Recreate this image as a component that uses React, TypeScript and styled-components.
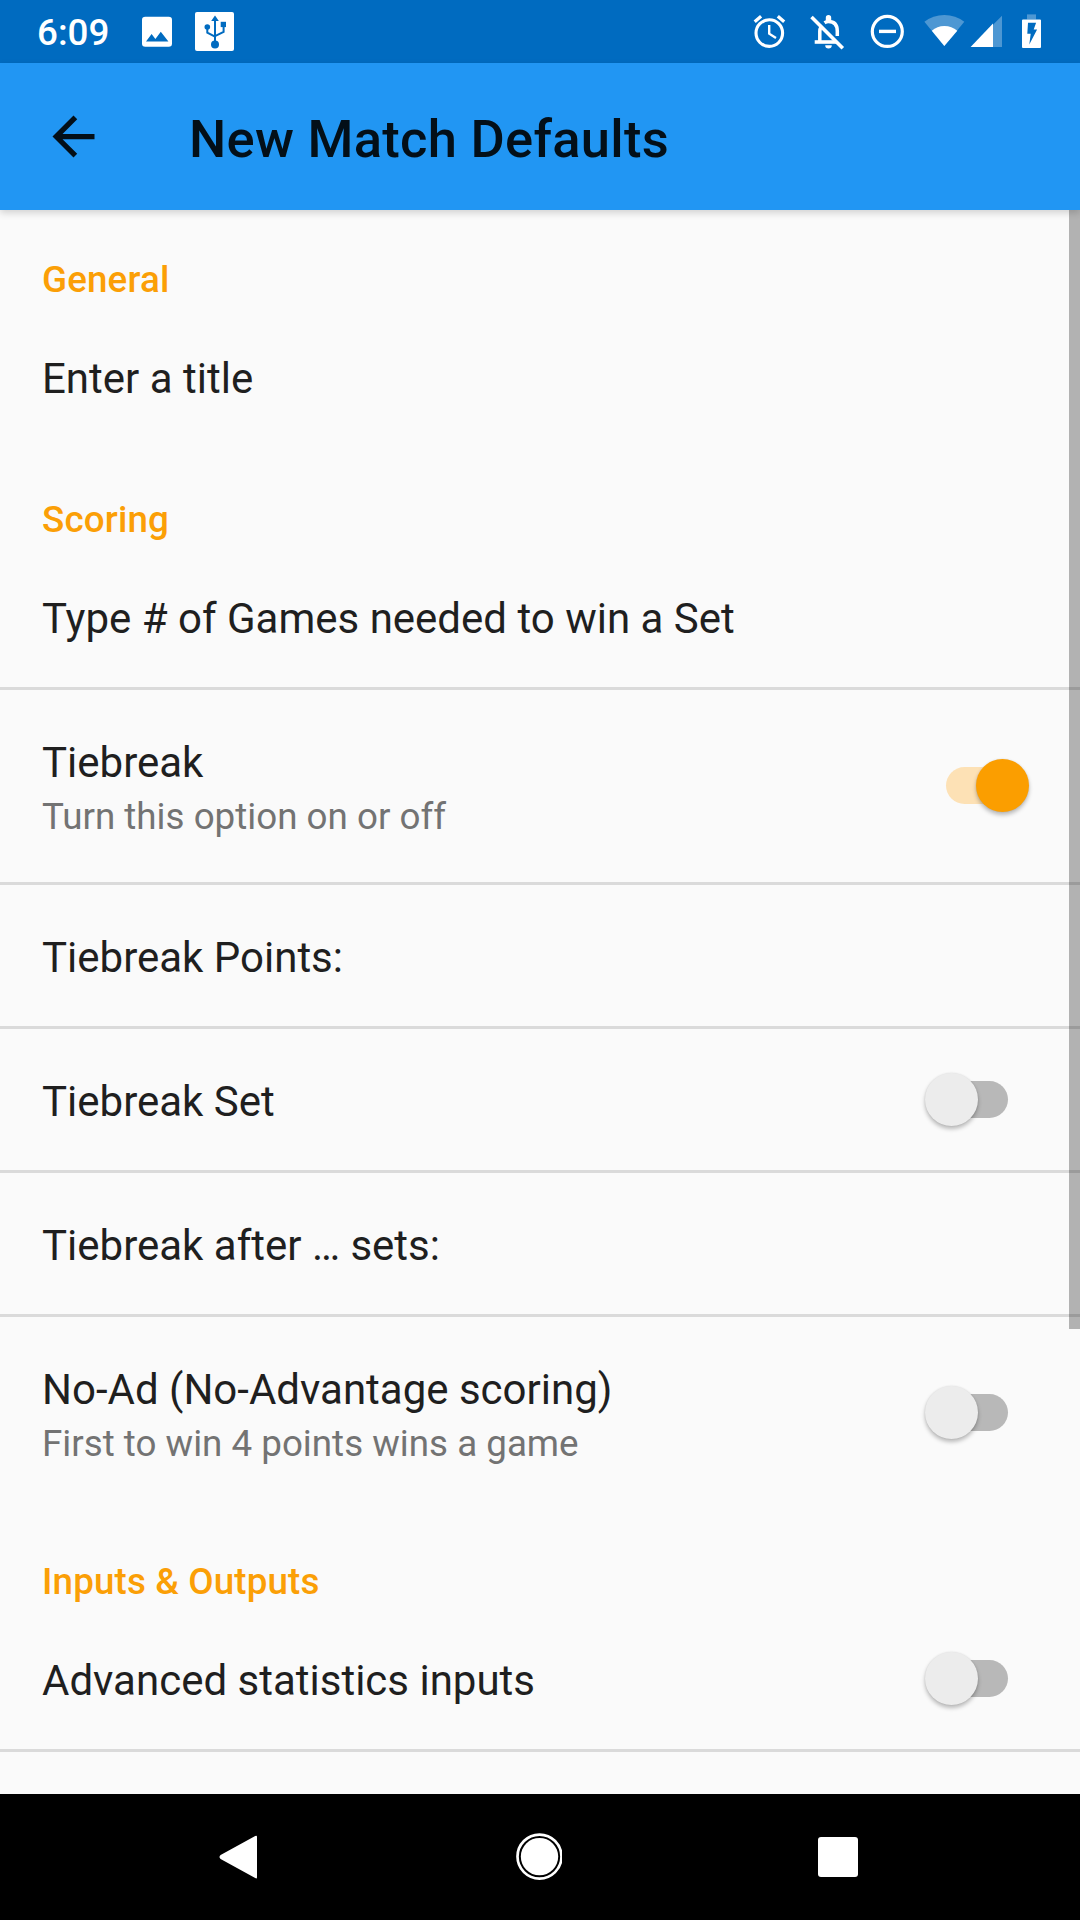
import React from "react";
import styled, { createGlobalStyle } from "styled-components";

const GlobalStyle = createGlobalStyle`
  html, body { margin: 0; padding: 0; background: #fafafa; }
  * { box-sizing: border-box; }
`;

const Screen = styled.div`
  width: 1080px;
  height: 1920px;
  display: flex;
  flex-direction: column;
  overflow: hidden;
  background: #fafafa;
  font-family: Roboto, "Noto Sans", sans-serif;
`;

const StatusBar = styled.header`
  flex: none;
  height: 63px;
  display: flex;
  align-items: center;
  padding: 0 39px 0 37px;
  background: #006bc0;
  color: #fff;
`;

const Clock = styled.span`
  width: 105px;
  padding-top: 1px;
  font-size: 36.75px;
  line-height: 43px;
  font-weight: 500;
`;

const StatusGroup = styled.div`
  display: flex;
  align-items: center;
  gap: ${(p: { $gap?: number }) => p.$gap ?? 0}px;
`;

const Spacer = styled.div`
  flex: 1;
`;

const Glyph = styled.svg`
  display: block;
  flex: none;
`;

const AppBar = styled.div`
  flex: none;
  height: 147px;
  display: flex;
  align-items: center;
  padding-left: 42px;
  background: #2196f3;
  box-shadow: 0 3px 7px rgba(0, 0, 0, 0.16);
  z-index: 1;
`;

const BackButton = styled.button`
  display: flex;
  width: 63px;
  height: 63px;
  margin: 0 84px 0 0;
  padding: 0;
  border: 0;
  background: none;
  color: rgba(0, 0, 0, 0.9);
`;

const Title = styled.h1`
  margin: 0;
  padding-top: 4px;
  font-size: 52.5px;
  line-height: 62px;
  font-weight: 500;
  letter-spacing: 0.28px;
  white-space: nowrap;
  color: rgba(0, 0, 0, 0.9);
`;

const Content = styled.main`
  position: relative;
  flex: 1;
  min-height: 0;
  overflow: hidden;
`;

const ScrollThumb = styled.div`
  position: absolute;
  top: 0;
  right: 0;
  width: 11px;
  height: 1119px;
  background: rgba(0, 0, 0, 0.285);
`;

const SectionTitle = styled.h2<{ $first?: boolean }>`
  display: flex;
  align-items: flex-end;
  height: ${(p) => (p.$first ? 96 : 99)}px;
  margin: 0;
  padding: 0 42px 5px;
  font-size: 36.75px;
  line-height: 43px;
  font-weight: 500;
  letter-spacing: 0.15px;
  color: #fb9f06;
`;

const Row = styled.div<{ $tall?: boolean; $divider?: boolean }>`
  display: flex;
  align-items: center;
  justify-content: space-between;
  box-sizing: content-box;
  height: ${(p) => (p.$tall ? 192 : 141)}px;
  padding-left: 42px;
  border-bottom: ${(p) => (p.$divider ? "3px solid #dadada" : "0")};
`;

const RowText = styled.div`
  align-self: flex-start;
  padding-top: 48px;
  white-space: nowrap;
`;

const Label = styled.div`
  font-size: 42px;
  line-height: 49px;
  color: #1f1f1f;
`;

const Detail = styled.div`
  margin-top: 8px;
  font-size: 36.75px;
  line-height: 43px;
  color: #737373;
`;

const Switch = styled.button<{ $on?: boolean; $raised?: boolean }>`
  display: flex;
  align-items: center;
  justify-content: ${(p) => (p.$on ? "flex-end" : "flex-start")};
  width: 83px;
  height: 53px;
  margin: 0 ${(p) => (p.$on ? 51.4 : 72)}px ${(p) => (p.$raised ? 1 : 0)}px 0;
  padding: 0;
  border: 0;
  background: none;
`;

const Track = styled.span<{ $on?: boolean }>`
  flex: none;
  order: ${(p) => (p.$on ? 0 : 1)};
  width: 70px;
  height: 37px;
  margin: ${(p) => (p.$on ? "0 -40px 0 0" : "0 0 0 -40px")};
  border-radius: 19px;
  background: ${(p) => (p.$on ? "#fde1b5" : "#b8b8b8")};
`;

const Thumb = styled.span<{ $on?: boolean }>`
  flex: none;
  z-index: 1;
  width: 53px;
  height: 53px;
  border-radius: 50%;
  background: ${(p) => (p.$on ? "#fb9e00" : "#ececec")};
  box-shadow: 0 3px 4px rgba(0, 0, 0, 0.26), 0 0 2px rgba(0, 0, 0, 0.1);
`;

const NavBar = styled.nav`
  flex: none;
  height: 126px;
  display: flex;
  align-items: center;
  justify-content: space-between;
  padding: 0 222px 0 219px;
  background: #000;
`;

function Toggle({ on, raised }: { on?: boolean; raised?: boolean }) {
  return (
    <Switch $on={on} $raised={raised} role="switch" aria-checked={!!on}>
      <Track $on={on} />
      <Thumb $on={on} />
    </Switch>
  );
}

type Setting = { label: string; detail?: string; toggle?: "on" | "off"; divider?: boolean };

const sections: { title: string; rows: Setting[] }[] = [
  { title: "General", rows: [{ label: "Enter a title" }] },
  {
    title: "Scoring",
    rows: [
      { label: "Type # of Games needed to win a Set", divider: true },
      { label: "Tiebreak", detail: "Turn this option on or off", toggle: "on", divider: true },
      { label: "Tiebreak Points:", divider: true },
      { label: "Tiebreak Set", toggle: "off", divider: true },
      { label: "Tiebreak after … sets:", divider: true },
      { label: "No-Ad (No-Advantage scoring)", detail: "First to win 4 points wins a game", toggle: "off" },
    ],
  },
  {
    title: "Inputs & Outputs",
    rows: [{ label: "Advanced statistics inputs", toggle: "off", divider: true }],
  },
];

export default function App() {
  return (
    <>
      <GlobalStyle />
      <Screen>
        <StatusBar>
          <Clock>6:09</Clock>
          <StatusGroup $gap={23}>
            <Glyph width="30" height="63" viewBox="142 0 30 63">
              <rect x="142" y="16.7" width="30" height="30" rx="3.3" fill="#fff" />
              <path d="M146 41.6l5.6-7.6 3.8 5 5.4-7.2 7.6 9.8z" fill="#006bc0" />
            </Glyph>
            <Glyph width="39" height="63" viewBox="195 0 39 63">
              <rect x="195" y="12" width="39" height="39" rx="2" fill="#fff" />
              <g fill="#006bc0">
                <path d="M215 15.6l3.8 5.3h-7.6z" />
                <circle cx="215" cy="44.5" r="4" />
                <circle cx="207.3" cy="27" r="2.8" />
                <rect x="220.7" y="21.8" width="5.3" height="5.3" />
              </g>
              <path d="M215 20v22M207.3 28v4.6l7.7 4M223.6 26v6l-8.6 4.2" fill="none" stroke="#006bc0" strokeWidth="2" />
            </Glyph>
          </StatusGroup>
          <Spacer />
          <StatusGroup>
            <Glyph width="56" height="63" viewBox="752 0 56 63" fill="none" stroke="#fff">
              <circle cx="769.3" cy="33.1" r="13.3" strokeWidth="3.1" />
              <path d="M769.2 25v8.7l6.8 4.2" strokeWidth="2.4" />
              <path d="M754.7 21.8l6.4-5.5M777.8 16.3l6.4 5.5" strokeWidth="3.3" />
            </Glyph>
            <Glyph width="60" height="63" viewBox="808 0 60 63" fill="none" stroke="#fff">
              <path d="M814.7 42h22" strokeWidth="3.6" />
              <path d="M819.8 42V31.5q0-2.5 1.2-4.5M824.5 22.8q2-1.3 4-1.3 8.7 0 8.8 9.6v5" strokeWidth="3.5" />
              <path d="M811.5 17l31.3 31.3" strokeWidth="3.6" />
              <path d="M825.8 22v-4.3a2.6 2.6 0 0 1 5.4 0V22zM825.2 45.3h6.6a3.3 3.3 0 0 1-6.6 0z" fill="#fff" stroke="none" />
            </Glyph>
            <Glyph width="54" height="63" viewBox="868 0 54 63" fill="none" stroke="#fff">
              <circle cx="887.3" cy="31.4" r="15" strokeWidth="3.2" />
              <path d="M879 31.4h17" strokeWidth="3.4" />
            </Glyph>
            <Glyph width="46" height="63" viewBox="922 0 46 63" fill="#fff">
              <path d="M924.4 21.8Q933 15 944.3 15t20 6.8L944.3 45.9z" opacity=".3" />
              <path d="M931.8 30.7Q937 26 944.4 26t12.9 4.7L944.3 45.9z" />
            </Glyph>
            <Glyph width="50" height="63" viewBox="968 0 50 63" fill="#fff">
              <path d="M993 24.7l9-9V47h-9z" opacity=".3" />
              <path d="M970.6 47L993 23.6V47z" />
            </Glyph>
            <Glyph width="23" height="63" viewBox="1018 0 23 63" fill="#fff">
              <path d="M1027 14.4h9v5h-9z" opacity=".3" />
              <path fillRule="evenodd" d="M1022 20.4q0-1 1-1h17q1 0 1 1V47q0 1-1 1h-17q-1 0-1-1zM1028 22.7l-.7 11h3.4l-1.4 10.7 7.8-15h-3.4l2.4-6.7z" />
            </Glyph>
          </StatusGroup>
        </StatusBar>
        <AppBar>
          <BackButton aria-label="Back">
            <Glyph width="63" height="63" viewBox="0 0 24 24" fill="currentColor">
              <path d="M20 11H7.83l5.59-5.59L12 4l-8 8 8 8 1.41-1.41L7.83 13H20v-2z" />
            </Glyph>
          </BackButton>
          <Title>New Match Defaults</Title>
        </AppBar>
        <Content>
          {sections.map((s, i) => (
            <section key={s.title}>
              <SectionTitle $first={i === 0}>{s.title}</SectionTitle>
              {s.rows.map((r) => (
                <Row key={r.label} $tall={!!r.detail} $divider={r.divider}>
                  <RowText>
                    <Label>{r.label}</Label>
                    {r.detail && <Detail>{r.detail}</Detail>}
                  </RowText>
                  {r.toggle && <Toggle on={r.toggle === "on"} raised={!!r.detail} />}
                </Row>
              ))}
            </section>
          ))}
          <ScrollThumb />
        </Content>
        <NavBar>
          <Glyph width="39" height="46" viewBox="219 1834 39 46" fill="#fff">
            <path d="M255.2 1836.1q1.8-1.1 1.8.8v40.3q0 1.9-1.8.8l-34.6-18.9q-2.2-2 0-4.1z" />
          </Glyph>
          <Glyph width="48" height="48" viewBox="514 1833 48 48" fill="#fff">
            <circle cx="539.5" cy="1856.6" r="18.7" />
            <circle cx="539.5" cy="1856.6" r="22" fill="none" stroke="#fff" strokeWidth="2.7" />
          </Glyph>
          <Glyph width="40" height="40" viewBox="0 0 40 40" fill="#fff">
            <rect width="40" height="40" rx="3" />
          </Glyph>
        </NavBar>
      </Screen>
    </>
  );
}
